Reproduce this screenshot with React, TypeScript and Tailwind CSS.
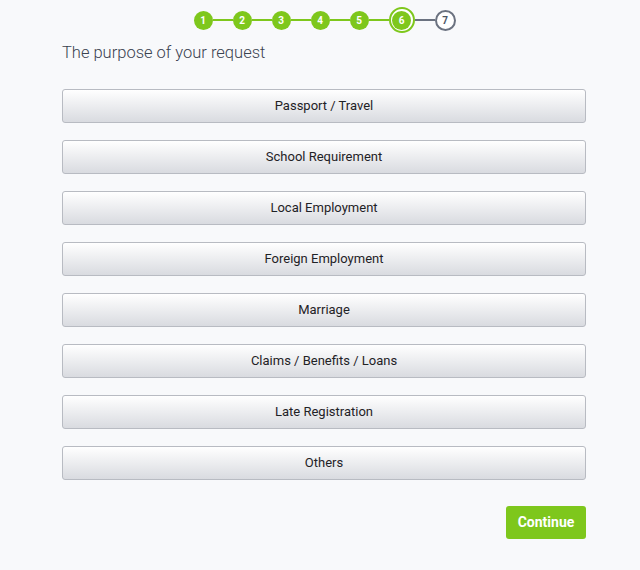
import { useState } from 'react'

const options = [
  'Passport / Travel',
  'School Requirement',
  'Local Employment',
  'Foreign Employment',
  'Marriage',
  'Claims / Benefits / Loans',
  'Late Registration',
  'Others',
]

function Stepper({ current }: { current: number }) {
  const steps = [1, 2, 3, 4, 5, 6, 7]
  return (
    <div className="flex items-center justify-center h-[40px] pl-[9px]">
      {steps.map((n, i) => (
        <div key={n} className="flex items-center">
          {i > 0 && (
            <div className={`h-[2px] w-[20px] ${n <= current ? 'bg-[#7ec71c]' : 'bg-[#6b7280]'}`} />
          )}
          {n < current && (
            <div className="w-[19px] h-[19px] rounded-full bg-[#7ec71c] text-white text-[10px] font-bold flex items-center justify-center">
              {n}
            </div>
          )}
          {n === current && (
            <div className="w-[26px] h-[26px] rounded-full border-2 border-[#7ec71c] bg-white flex items-center justify-center">
              <div className="w-[19px] h-[19px] rounded-full bg-[#7ec71c] text-white text-[10px] font-bold flex items-center justify-center">
                {n}
              </div>
            </div>
          )}
          {n > current && (
            <div className="w-[21px] h-[21px] rounded-full border-2 border-[#6b7280] bg-white text-[#4b5563] text-[10px] font-bold flex items-center justify-center">
              {n}
            </div>
          )}
        </div>
      ))}
    </div>
  )
}

export default function App() {
  const [picked, setPicked] = useState<string | null>(null)

  return (
    <div className="min-h-[570px] bg-[#f8f9fb] font-['Roboto','Liberation_Sans',sans-serif]">
      <Stepper current={6} />
      <div className="pl-[62px] pr-[54px] pt-[1px]">
        <h1 className="text-[16.5px] font-light text-[#3a4250] leading-[24px]">
          The purpose of your request
        </h1>

        <div className="mt-[24px] flex flex-col gap-[17px]">
          {options.map(o => (
            <button
              key={o}
              onClick={() => setPicked(o)}
              className={`h-[34px] w-full rounded-[3px] border border-[#b8bbc2] bg-gradient-to-b from-[#ffffff] to-[#d9dbe0] text-[13px] text-[#1f2226] ${
                picked === o ? 'ring-2 ring-[#7ec71c]' : ''
              }`}
            >
              {o}
            </button>
          ))}
        </div>

        <div className="flex justify-end mt-[26px]">
          <button className="w-[80px] h-[33px] rounded-[3px] bg-[#7ec71c] text-white text-[14px] font-bold">
            Continue
          </button>
        </div>
      </div>
    </div>
  )
}
